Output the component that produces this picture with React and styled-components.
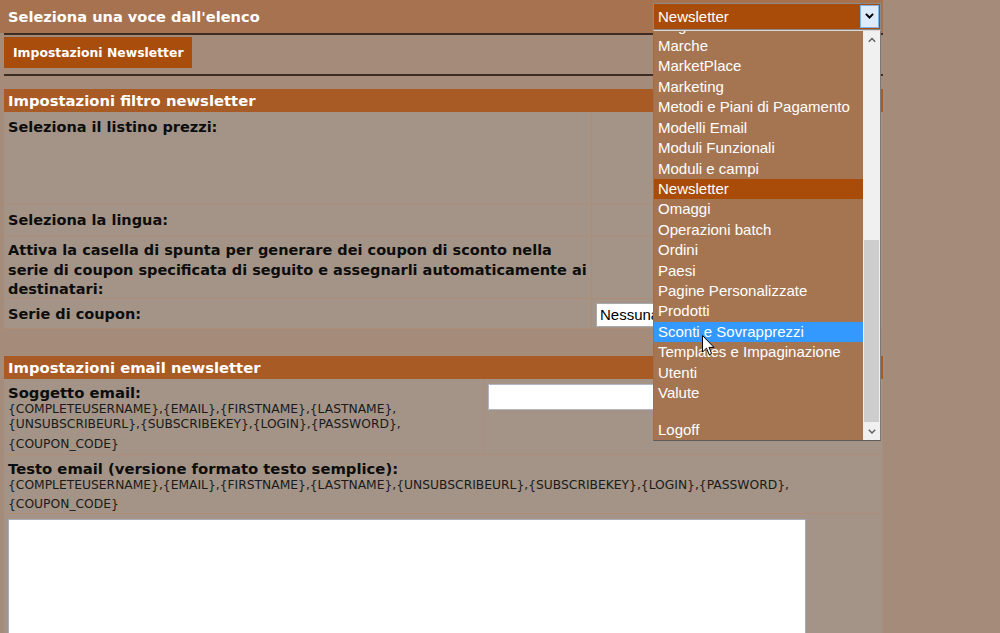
import React from 'react';
import styled, { createGlobalStyle } from 'styled-components';

const Global = createGlobalStyle`
  html, body { margin: 0; padding: 0; background: #a58c7a; }
  body { width: 1000px; height: 633px; overflow: hidden; font-family: "DejaVu Sans", Verdana, sans-serif; }
  * { box-sizing: border-box; }
`;

const Page = styled.div`
  position: relative;
  width: 883px;
  height: 633px;
`;

const TopBar = styled.div`
  height: 33px;
  background: #a6724f;
  display: flex;
  align-items: center;
  padding-left: 8px;
`;

const Title = styled.h1`
  margin: 0;
  font-size: 14.6px;
  font-weight: bold;
  color: #fff;
`;

const SelectWrap = styled.div`
  position: relative;
  margin-left: auto;
  margin-right: 2px;
  width: 228px;
  height: 27px;
  z-index: 5;
`;

const SelectBox = styled.div`
  height: 100%;
  display: flex;
  align-items: stretch;
  border: 1px solid #8a8a8a;
  background: #a94b09;
  padding: 1px;
`;

const SelectValue = styled.div`
  flex: 1;
  color: #fff;
  font-family: "Liberation Sans", Arial, sans-serif;
  font-size: 15px;
  line-height: 23px;
  padding-left: 3px;
`;

const ArrowBtn = styled.div`
  width: 19px;
  background: #dcecfc;
  border: 1px solid #7eb4ea;
  display: flex;
  align-items: center;
  justify-content: center;
`;

const DropList = styled.div`
  position: absolute;
  top: 100%;
  left: 0;
  width: 228px;
  height: 411px;
  border: 1px solid #7a7a7a;
  border-top-color: #d8d8d8;
  border-bottom-color: #5a5a5a;
  background: #a57552;
  display: flex;
`;

const Options = styled.div`
  flex: 1;
  overflow: hidden;
  display: flex;
  flex-direction: column;
  justify-content: flex-end;
`;

const Option = styled.div`
  flex-shrink: 0;
  height: ${p => (p.$blank ? '16px' : '20.43px')};
  line-height: 20.43px;
  padding-left: 4px;
  color: #fff;
  font-family: "Liberation Sans", Arial, sans-serif;
  font-size: 15px;
  white-space: nowrap;
  background: ${p => (p.$selected ? '#a94b09' : p.$hover ? '#3399ff' : 'transparent')};
`;

const ScrollBar = styled.div`
  width: 17px;
  background: #f0f0f0;
  display: flex;
  flex-direction: column;
`;

const ScrollArrow = styled.div`
  height: 17px;
  display: flex;
  align-items: center;
  justify-content: center;
`;

const Track = styled.div`
  flex: 1;
  display: flex;
  flex-direction: column;
  justify-content: flex-end;
  padding: 0 1px 1px;
`;

const Thumb = styled.div`
  height: ${p => p.$h}px;
  background: #cdcdcd;
`;

const Content = styled.div`
  padding-left: 4px;
`;

const Rule = styled.div`
  height: 2px;
  background: #3e2c22;
  margin-top: ${p => p.$mt || 0}px;
`;

const ButtonRow = styled.div`
  margin-top: 2px;
  display: flex;
`;

const TabButton = styled.button`
  height: 31px;
  width: 188px;
  border: 0;
  background: #a94d0d;
  color: #fff;
  font-family: "DejaVu Sans", Verdana, sans-serif;
  font-weight: bold;
  font-size: 12.4px;
  padding: 0 0 0 9px;
  text-align: left;
`;

const SectionHeader = styled.div`
  margin-top: ${p => p.$mt}px;
  width: 879px;
  height: 23px;
  background: #a85b25;
  color: #fff;
  font-weight: bold;
  font-size: 14.8px;
  line-height: 23px;
  padding-left: 4px;
`;

const Table = styled.div`
  display: grid;
  width: 879px;
  grid-template-columns: ${p => p.$cols};
  grid-template-rows: ${p => p.$rows};
  background: #a39487;
`;

const Cell = styled.div`
  border-right: 1px solid #ad8d76;
  border-bottom: 1px solid #ad8d76;
  padding: ${p => p.$pad || '6px 4px 0'};
  grid-column: ${p => (p.$span ? '1 / -1' : 'auto')};
  overflow: hidden;
`;

const Label = styled.div`
  font-weight: bold;
  font-size: 14.5px;
  line-height: 19.5px;
  color: #0d0d0d;
  white-space: nowrap;
`;

const BigLabel = styled.div`
  font-weight: bold;
  font-size: 14.8px;
  line-height: 18px;
  color: #0d0d0d;
`;

const Tokens = styled.div`
  font-size: 12.3px;
  line-height: 15px;
  color: #1a1a1a;
  margin-top: ${p => p.$mt || 0}px;
  white-space: nowrap;
`;

const FakeSelect = styled.div`
  width: 150px;
  height: 24px;
  background: #fff;
  border: 1px solid #a9a9a9;
  font-family: "Liberation Sans", Arial, sans-serif;
  font-size: 15px;
  line-height: 22px;
  padding-left: 3px;
  color: #000;
`;

const TextInput = styled.input`
  display: block;
  width: 250px;
  height: 26px;
  border: 1px solid #b3b6c4;
  background: #fff;
  margin: 0;
`;

const TextArea = styled.textarea`
  display: block;
  width: 798px;
  height: 140px;
  border: 1px solid #a9abb8;
  background: #fff;
  resize: none;
  margin: 0;
`;

const Cursor = styled.svg`
  position: absolute;
  left: 702px;
  top: 335px;
  z-index: 10;
`;

const items = [
  'Lingue', 'Marche', 'MarketPlace', 'Marketing', 'Metodi e Piani di Pagamento',
  'Modelli Email', 'Moduli Funzionali', 'Moduli e campi', 'Newsletter', 'Omaggi',
  'Operazioni batch', 'Ordini', 'Paesi', 'Pagine Personalizzate', 'Prodotti',
  'Sconti e Sovrapprezzi', 'Templates e Impaginazione', 'Utenti', 'Valute', '', 'Logoff',
];

const Chevron = ({ up, color = '#000', w = 9, sw = 2.2 }) => (
  <svg width={w} height={w * 0.7} viewBox="0 0 10 7">
    <path d={up ? 'M1 6 L5 2 L9 6' : 'M1 1 L5 5 L9 1'} fill="none" stroke={color} strokeWidth={sw} />
  </svg>
);

export default function App() {
  return (
    <Page>
      <Global />
      <TopBar>
        <Title>Seleziona una voce dall'elenco</Title>
        <SelectWrap>
          <SelectBox>
            <SelectValue>Newsletter</SelectValue>
            <ArrowBtn><Chevron /></ArrowBtn>
          </SelectBox>
          <DropList>
            <Options>
              {items.map((it, i) => (
                <Option key={i} $blank={it === ''} $selected={it === 'Newsletter'} $hover={it === 'Sconti e Sovrapprezzi'}>
                  {it}
                </Option>
              ))}
            </Options>
            <ScrollBar>
              <ScrollArrow><Chevron up color="#606060" w={8} sw={1.8} /></ScrollArrow>
              <Track><Thumb $h={182} /></Track>
              <ScrollArrow><Chevron color="#606060" w={8} sw={1.8} /></ScrollArrow>
            </ScrollBar>
          </DropList>
        </SelectWrap>
      </TopBar>
      <Content>
        <Rule />
        <ButtonRow>
          <TabButton>Impostazioni Newsletter</TabButton>
        </ButtonRow>
        <Rule $mt={6} />
        <SectionHeader $mt={13}>Impostazioni filtro newsletter</SectionHeader>
        <Table $cols="588px 291px" $rows="93px 31px 63px 30px">
          <Cell><Label>Seleziona il listino prezzi:</Label></Cell>
          <Cell />
          <Cell><Label>Seleziona la lingua:</Label></Cell>
          <Cell />
          <Cell $pad="5px 4px 0">
            <Label>
              Attiva la casella di spunta per generare dei coupon di sconto nella<br />
              serie di coupon specificata di seguito e assegnarli automaticamente ai<br />
              destinatari:
            </Label>
          </Cell>
          <Cell />
          <Cell><Label>Serie di coupon:</Label></Cell>
          <Cell $pad="4px 4px 0"><FakeSelect>Nessuna</FakeSelect></Cell>
        </Table>
        <SectionHeader $mt={27}>Impostazioni email newsletter</SectionHeader>
        <Table $cols="480px 399px" $rows="76px 59px 140px">
          <Cell $pad="5px 4px 0">
            <BigLabel>Soggetto email:</BigLabel>
            <Tokens>
              {'{COMPLETEUSERNAME},{EMAIL},{FIRSTNAME},{LASTNAME},'}<br />
              {'{UNSUBSCRIBEURL},{SUBSCRIBEKEY},{LOGIN},{PASSWORD},'}
            </Tokens>
            <Tokens $mt={5}>{'{COUPON_CODE}'}</Tokens>
          </Cell>
          <Cell $pad="5px 4px 0"><TextInput type="text" /></Cell>
          <Cell $span $pad="5px 4px 0">
            <BigLabel>Testo email (versione formato testo semplice):</BigLabel>
            <Tokens>
              {'{COMPLETEUSERNAME},{EMAIL},{FIRSTNAME},{LASTNAME},{UNSUBSCRIBEURL},{SUBSCRIBEKEY},{LOGIN},{PASSWORD},'}
            </Tokens>
            <Tokens $mt={4}>{'{COUPON_CODE}'}</Tokens>
          </Cell>
          <Cell $span $pad="5px 4px 0"><TextArea /></Cell>
        </Table>
      </Content>
      <Cursor width="13" height="21" viewBox="0 0 13 21">
        <path d="M0.5 0.5 L0.5 17 L4.5 13.2 L7.2 19.6 L9.6 18.6 L7 12.4 L12 12.4 Z" fill="#fff" stroke="#000" strokeWidth="1" />
      </Cursor>
    </Page>
  );
}
